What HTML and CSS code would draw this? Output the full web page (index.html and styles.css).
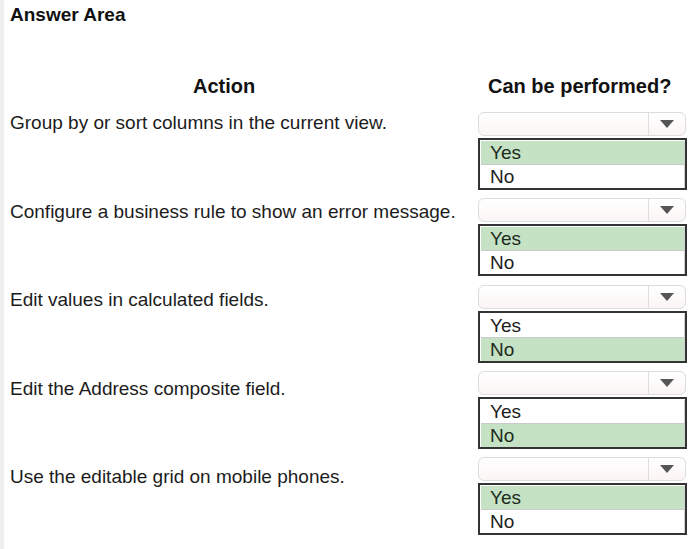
FILE: index.html
```html
<!DOCTYPE html>
<html>
<head>
<meta charset="utf-8">
<link rel="stylesheet" href="styles.css">
</head>
<body>
<div class="page">
  <div class="title">Answer Area</div>
  <div class="table">
    <div class="col col-actions">
      <div class="head head-action">Action</div>
      <div class="action">Group by or sort columns in the current view.</div>
      <div class="action">Configure a business rule to show an error message.</div>
      <div class="action">Edit values in calculated fields.</div>
      <div class="action">Edit the Address composite field.</div>
      <div class="action">Use the editable grid on mobile phones.</div>
    </div>
    <div class="col col-answers">
      <div class="head head-answer">Can be performed?</div>
      <div class="select">
        <div class="dropdown"><span class="field"></span><span class="arrow"><svg width="14" height="8" viewBox="0 0 14 8"><path d="M0 0H14L7 8Z" fill="#555"/></svg></span></div>
        <div class="list"><div class="opt opt-first sel">Yes</div><div class="opt">No</div></div>
      </div>
      <div class="select">
        <div class="dropdown"><span class="field"></span><span class="arrow"><svg width="14" height="8" viewBox="0 0 14 8"><path d="M0 0H14L7 8Z" fill="#555"/></svg></span></div>
        <div class="list"><div class="opt opt-first sel">Yes</div><div class="opt">No</div></div>
      </div>
      <div class="select">
        <div class="dropdown"><span class="field"></span><span class="arrow"><svg width="14" height="8" viewBox="0 0 14 8"><path d="M0 0H14L7 8Z" fill="#555"/></svg></span></div>
        <div class="list"><div class="opt opt-first">Yes</div><div class="opt sel">No</div></div>
      </div>
      <div class="select">
        <div class="dropdown"><span class="field"></span><span class="arrow"><svg width="14" height="8" viewBox="0 0 14 8"><path d="M0 0H14L7 8Z" fill="#555"/></svg></span></div>
        <div class="list"><div class="opt opt-first">Yes</div><div class="opt sel">No</div></div>
      </div>
      <div class="select">
        <div class="dropdown"><span class="field"></span><span class="arrow"><svg width="14" height="8" viewBox="0 0 14 8"><path d="M0 0H14L7 8Z" fill="#555"/></svg></span></div>
        <div class="list"><div class="opt opt-first sel">Yes</div><div class="opt">No</div></div>
      </div>
    </div>
  </div>
</div>
</body>
</html>
```
FILE: styles.css
```css
html, body {
  margin: 0;
  padding: 0;
  background: #ffffff;
}
body {
  font-family: "Liberation Sans", Arial, sans-serif;
  color: #1c1c1c;
}
.page {
  border-left: 4px solid #efefef;
  padding: 4px 0 0 6px;
  min-height: 545px;
  box-sizing: border-box;
}
.title {
  font-size: 19px;
  line-height: 22px;
  font-weight: bold;
  color: #111;
}
.table {
  display: flex;
  margin-top: 49px;
}
.col {
  display: flex;
  flex-direction: column;
}
.col-actions {
  width: 468px;
}
.col-answers {
  width: 209px;
}
.head {
  font-size: 20px;
  line-height: 23px;
  font-weight: bold;
  color: #111;
  height: 23px;
  margin-bottom: 14px;
}
.head-action {
  padding-left: 183px;
}
.head-answer {
  padding-left: 10px;
}
.action {
  font-size: 19px;
  line-height: 22px;
  height: 88.5px;
  white-space: nowrap;
}
.select {
  height: 78px;
  margin-bottom: 8.25px;
  display: flex;
  flex-direction: column;
  gap: 2px;
}
.dropdown {
  width: 208px;
  height: 24px;
  box-sizing: border-box;
  border: 1px solid #dcdcdc;
  border-radius: 6px;
  background: linear-gradient(#ffffff, #fbf5f5);
  display: flex;
}
.field {
  flex: 1;
}
.arrow {
  width: 36px;
  border-left: 1px solid #dedede;
  display: flex;
  align-items: center;
  justify-content: center;
}
.list {
  width: 209px;
  height: 52px;
  box-sizing: border-box;
  border: 2px solid #333;
  padding: 1px 0 0 1px;
  background: #fff;
}
.opt {
  height: 23px;
  line-height: 23px;
  font-size: 19px;
  padding-left: 9px;
  border-right: 1px solid #d4d4d4;
  color: #1c1c1c;
}
.opt-first {
  border-bottom: 1px solid #cacaca;
}
.sel {
  background: #c5e2c4;
  color: #1d2a1d;
}
```
